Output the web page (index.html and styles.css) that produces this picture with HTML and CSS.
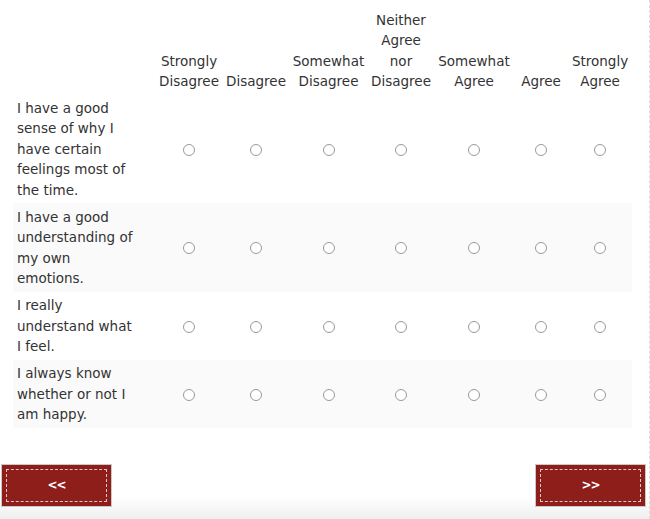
FILE: index.html
```html
<!DOCTYPE html>
<html lang="en">
<head>
<meta charset="utf-8">
<title>Survey</title>
<link rel="stylesheet" href="styles.css">
</head>
<body>
<div class="page">
  <table class="matrix">
    <colgroup>
      <col class="c-q"><col class="c1"><col class="c2"><col class="c3"><col class="c4"><col class="c5"><col class="c6"><col class="c7">
    </colgroup>
    <thead>
      <tr>
        <th></th>
        <th>Strongly Disagree</th>
        <th>Disagree</th>
        <th>Somewhat Disagree</th>
        <th>Neither Agree nor Disagree</th>
        <th>Somewhat Agree</th>
        <th>Agree</th>
        <th>Strongly Agree</th>
      </tr>
    </thead>
    <tbody>
      <tr>
        <td class="q">I have a good sense of why I have certain feelings most of the time.</td>
        <td><input type="radio" name="q1"></td><td><input type="radio" name="q1"></td><td><input type="radio" name="q1"></td><td><input type="radio" name="q1"></td><td><input type="radio" name="q1"></td><td><input type="radio" name="q1"></td><td><input type="radio" name="q1"></td>
      </tr>
      <tr class="alt">
        <td class="q">I have a good understanding of my own emotions.</td>
        <td><input type="radio" name="q2"></td><td><input type="radio" name="q2"></td><td><input type="radio" name="q2"></td><td><input type="radio" name="q2"></td><td><input type="radio" name="q2"></td><td><input type="radio" name="q2"></td><td><input type="radio" name="q2"></td>
      </tr>
      <tr>
        <td class="q">I really understand what I feel.</td>
        <td><input type="radio" name="q3"></td><td><input type="radio" name="q3"></td><td><input type="radio" name="q3"></td><td><input type="radio" name="q3"></td><td><input type="radio" name="q3"></td><td><input type="radio" name="q3"></td><td><input type="radio" name="q3"></td>
      </tr>
      <tr class="alt">
        <td class="q">I always know whether or not I am happy.</td>
        <td><input type="radio" name="q4"></td><td><input type="radio" name="q4"></td><td><input type="radio" name="q4"></td><td><input type="radio" name="q4"></td><td><input type="radio" name="q4"></td><td><input type="radio" name="q4"></td><td><input type="radio" name="q4"></td>
      </tr>
    </tbody>
  </table>
  <div class="nav">
    <button class="btn btn-prev"><span class="btn-inner">&lt;&lt;</span></button>
    <button class="btn btn-next"><span class="btn-inner">&gt;&gt;</span></button>
  </div>
</div>
</body>
</html>
```
FILE: styles.css
```css
html, body {
  margin: 0;
  padding: 0;
  background: #fff;
}
body {
  font-family: "DejaVu Sans", Verdana, sans-serif;
  font-size: 13.5px;
  color: #333;
  width: 650px;
  height: 519px;
  overflow: hidden;
}
.page {
  position: relative;
  width: 650px;
  height: 519px;
  box-sizing: border-box;
  border-right: 1px dashed #ddd;
  background: linear-gradient(to bottom, #fff 0, #fff 496px, #efefef 519px);
  padding-top: 7px;
}
.matrix {
  margin-left: 13px;
  width: 619px;
  border-collapse: collapse;
  table-layout: fixed;
  line-height: 20.4px;
}
.c-q { width: 142px; }
.c1 { width: 68px; }
.c2 { width: 66px; }
.c3 { width: 79px; }
.c4 { width: 66px; }
.c5 { width: 80px; }
.c6 { width: 54px; }
.c7 { width: 64px; }
.matrix th {
  font-weight: normal;
  text-align: center;
  vertical-align: bottom;
  padding: 3px 0;
}
.matrix td {
  text-align: center;
  vertical-align: middle;
  padding: 3.4px 0;
}
.matrix td.q {
  text-align: left;
  padding-left: 4px;
  padding-right: 18px;
}
.matrix tr.alt td {
  background: #fafafa;
}
.matrix input[type="radio"] {
  appearance: none;
  -webkit-appearance: none;
  width: 12px;
  height: 12px;
  margin: 0;
  border: 1px solid #999;
  border-radius: 50%;
  background: #fff;
  display: inline-block;
  vertical-align: middle;
}
.nav {
  display: flex;
  justify-content: space-between;
  margin-top: 36px;
  padding-left: 1px;
  padding-right: 3px;
}
.btn {
  height: 43px;
  background: #8d1e19;
  border: 1px solid #c9c9c9;
  padding: 4px;
  margin: 0;
  box-sizing: border-box;
  cursor: pointer;
  display: flex;
}
.btn-prev { width: 111px; }
.btn-next { width: 111px; }
.btn-inner {
  flex: 1;
  display: flex;
  align-items: center;
  justify-content: center;
  border: 1px dashed rgba(255,255,255,0.75);
  color: #fff;
  font-family: "DejaVu Sans", Verdana, sans-serif;
  font-weight: bold;
  font-size: 12px;
  letter-spacing: -1px;
}
```
